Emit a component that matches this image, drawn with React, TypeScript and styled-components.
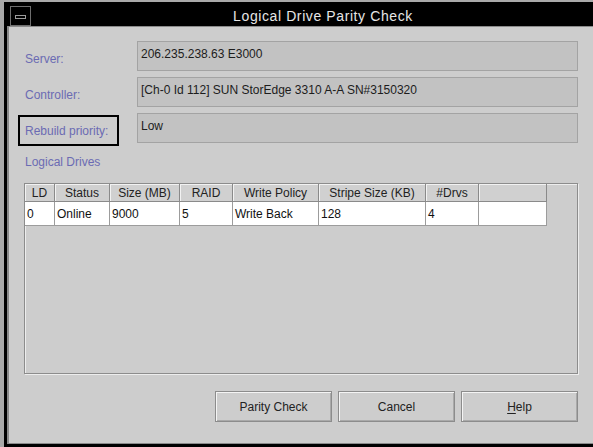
import styled, { createGlobalStyle } from 'styled-components';

const GlobalStyle = createGlobalStyle`
  html, body {
    margin: 0;
    padding: 0;
    height: 100%;
    overflow: hidden;
    background: #a9a9a9;
    font-family: "Liberation Sans", Arial, sans-serif;
    font-size: 12px;
  }
  #root {
    height: 100%;
  }
`;

const Shell = styled.div`
  height: 100vh;
  box-sizing: border-box;
  padding: 2px 0 0 4px;
  display: flex;
  flex-direction: column;
`;

const Frame = styled.div`
  flex: 1;
  display: flex;
  flex-direction: column;
  background: #000;
  border-left: 3px solid #000;
  border-top: 4px solid #000;
  border-bottom: 3px solid #000;
`;

const TitleBar = styled.div`
  height: 20px;
  display: flex;
  align-items: stretch;
  background: #000;
`;

const MenuBox = styled.div`
  width: 21px;
  margin-left: 3px;
  box-sizing: border-box;
  border: 1px solid #6e6e6e;
  display: flex;
  align-items: center;
  justify-content: center;
`;

const MenuGlyph = styled.span`
  width: 11px;
  height: 4px;
  box-sizing: border-box;
  border: 1px solid #9a9a9a;
  margin-top: 1px;
`;

const Title = styled.div`
  flex: 1;
  display: flex;
  align-items: center;
  justify-content: center;
  padding-left: 22px;
  color: #e6e6e6;
  font-size: 14px;
  letter-spacing: 0.6px;
`;

const Content = styled.div`
  flex: 1;
  display: flex;
  flex-direction: column;
  background: #cdcdcd;
  border-top: 1px solid #8a8a8a;
  border-left: 2px solid #8a8a8a;
  border-bottom: 1px solid #8a8a8a;
  padding: 14px 15px 0 9px;
`;

const Form = styled.div`
  display: grid;
  grid-template-columns: 119px 441px;
  grid-auto-rows: 30px;
  row-gap: 6px;
  align-items: start;
`;

const Label = styled.div<{ $focused?: boolean }>`
  height: 31px;
  width: 101px;
  margin-top: 2px;
  box-sizing: border-box;
  border: 2px solid ${({ $focused }) => ($focused ? '#000' : 'transparent')};
  padding-left: 5px;
  display: flex;
  align-items: center;
  color: #6b6bb3;
  white-space: nowrap;
`;

const Field = styled.div`
  height: 30px;
  box-sizing: border-box;
  background: #c2c2c2;
  border: 1px solid #a3a3a3;
  padding: 5px 0 0 3px;
  line-height: 14px;
  color: #1c1c1c;
`;

const SectionLabel = styled.div`
  margin: 12px 0 0 7px;
  line-height: 14px;
  color: #6b6bb3;
`;

const Panel = styled.div`
  margin: 14px 0 0 6px;
  height: 191px;
  box-sizing: border-box;
  border: 1px solid #8c8c8c;
  box-shadow: 1px 1px 0 #ededed, inset 1px 1px 0 #ededed;
`;

const Grid = styled.table`
  table-layout: fixed;
  border-collapse: separate;
  border-spacing: 0;
  width: 522px;
  font-size: 12px;
`;

const HeadCell = styled.th`
  height: 18px;
  padding: 0;
  box-sizing: border-box;
  background: #d0d0d0;
  border-right: 1px solid #8a8a8a;
  border-bottom: 1px solid #8a8a8a;
  box-shadow: inset 1px 1px 0 #f2f2f2;
  font-weight: normal;
  color: #222;
  text-align: center;
  white-space: nowrap;
  overflow: hidden;
`;

const Cell = styled.td`
  height: 24px;
  padding: 0 0 0 2px;
  box-sizing: border-box;
  background: #fff;
  border-right: 1px solid #9c9c9c;
  border-bottom: 1px solid #9c9c9c;
  color: #111;
  white-space: nowrap;
  overflow: hidden;
`;

const Buttons = styled.div`
  margin-top: 17px;
  display: flex;
  justify-content: flex-end;
  gap: 6px;
`;

const Button = styled.button`
  width: 117px;
  height: 31px;
  box-sizing: border-box;
  background: #cdcdcd;
  border: 1px solid #8c8c8c;
  box-shadow: inset 1px 1px 0 #f4f4f4, inset -1px -1px 0 #a9a9a9;
  font-family: "Liberation Sans", Arial, sans-serif;
  font-size: 12px;
  color: #222;
  padding: 0;
  u {
    text-decoration-thickness: 1px;
    text-underline-offset: 2px;
  }
`;

const columns = [
  { title: 'LD', width: 30 },
  { title: 'Status', width: 55 },
  { title: 'Size (MB)', width: 70 },
  { title: 'RAID', width: 53 },
  { title: 'Write Policy', width: 86 },
  { title: 'Stripe Size (KB)', width: 107 },
  { title: '#Drvs', width: 53 },
  { title: '', width: 68 },
];

const drives = [['0', 'Online', '9000', '5', 'Write Back', '128', '4', '']];

export default function App() {
  return (
    <>
      <GlobalStyle />
      <Shell>
        <Frame>
          <TitleBar>
            <MenuBox>
              <MenuGlyph />
            </MenuBox>
            <Title>Logical Drive Parity Check</Title>
          </TitleBar>
          <Content>
            <Form>
              <Label>Server:</Label>
              <Field>206.235.238.63 E3000</Field>
              <Label>Controller:</Label>
              <Field>[Ch-0 Id 112] SUN StorEdge 3310 A-A SN#3150320</Field>
              <Label $focused>Rebuild priority:</Label>
              <Field>Low</Field>
            </Form>
            <SectionLabel>Logical Drives</SectionLabel>
            <Panel>
              <Grid>
                <colgroup>
                  {columns.map((c, i) => (
                    <col key={i} style={{ width: c.width }} />
                  ))}
                </colgroup>
                <thead>
                  <tr>
                    {columns.map((c, i) => (
                      <HeadCell key={i}>{c.title}</HeadCell>
                    ))}
                  </tr>
                </thead>
                <tbody>
                  {drives.map((row, r) => (
                    <tr key={r}>
                      {row.map((v, i) => (
                        <Cell key={i}>{v}</Cell>
                      ))}
                    </tr>
                  ))}
                </tbody>
              </Grid>
            </Panel>
            <Buttons>
              <Button>Parity Check</Button>
              <Button>Cancel</Button>
              <Button>
                <u>H</u>elp
              </Button>
            </Buttons>
          </Content>
        </Frame>
      </Shell>
    </>
  );
}
